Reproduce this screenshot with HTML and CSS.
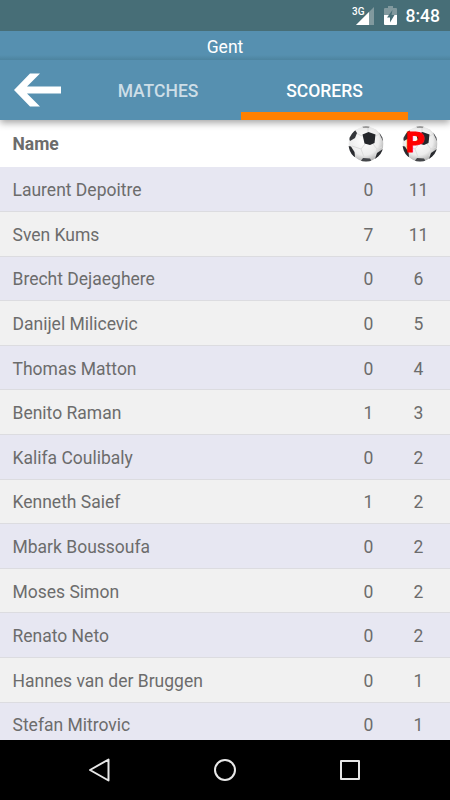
FILE: index.html
```html
<!DOCTYPE html>
<html>
<head>
<meta charset="UTF-8">
<meta name="viewport" content="width=device-width">
<title>Gent</title>
<link rel="stylesheet" href="styles.css">
</head>
<body>
<div class="screen">
	<div class="status">
		<svg class="signal" width="24" height="20" viewBox="0 0 24 20">
			<path d="M22 1V19H4Z" fill="#81999e"/>
			<path d="M0 0H13V9H0Z" fill="#476e77"/>
			<text x="0" y="9" class="net">3G</text>
			<path d="M17 6V19H4Z" fill="#fff"/>
		</svg>
		<svg class="battery" width="13" height="19" viewBox="0 0 13 19">
			<path d="M4 0H9V2H12Q13 2 13 3V9H0V3Q0 2 1 2H4Z" fill="#81999e"/>
			<path d="M0 9H13V18Q13 19 12 19H1Q0 19 0 18Z" fill="#fff"/>
			<path d="M8.5 4L3 11.5H6V16.5L10.5 9H7.5Z" fill="#476e77"/>
		</svg>
		<span class="clock">8:48</span>
	</div>
	<div class="title">Gent</div>
	<div class="tabs">
		<div class="back">
			<svg width="48" height="34" viewBox="0 0 48 34">
				<path d="M0 17L16 0.5H26L13 13.5H47V20.5H13L26 33.5H16Z" fill="#fff"/>
			</svg>
		</div>
		<div class="tab first">MATCHES</div>
		<div class="tab active">SCORERS</div>
	</div>
	<div class="list">
		<div class="head">
			<span class="name">Name</span>
			<svg class="ball" width="36" height="36" viewBox="0 0 36 36">
				<defs>
					<radialGradient id="shade" cx="0.45" cy="0.4" r="0.6">
						<stop offset="0" stop-color="#fff"/>
						<stop offset="0.7" stop-color="#ececec"/>
						<stop offset="1" stop-color="#b4b4b4"/>
					</radialGradient>
					<clipPath id="round"><circle cx="18" cy="18" r="17.5"/></clipPath>
					<g id="football" clip-path="url(#round)">
						<circle cx="18" cy="18" r="17.5" fill="url(#shade)"/>
						<path d="M20 0V6M14 10L8 7M28 10L31 8M17 18L13 23L4 20M25 18L29 23L34 21M13 23L16 31M29 23L27 30" stroke="#dcdcdc" stroke-width="1" fill="none"/>
						<path d="M14.5 8.5L20.5 6L27.5 8.5L26.5 17L22 19L16.5 17.5Z" fill="#24262a"/>
						<path d="M7 4L9 7L7 12L2 15L0 10Z" fill="#34363a"/>
						<path d="M0 20L3 20.5L6.5 26L7 31L0 29Z" fill="#292b2f"/>
						<path d="M15 32L22 32.5L24 36H12Z" fill="#44464a"/>
						<path d="M29 27L35 23L36 26L30 33L27 33Z" fill="#292b2f"/>
						<path d="M31 5L36 11L35 15L32 9Z" fill="#44464a"/>
						<path d="M14 0H22L21 1.5H15Z" fill="#555"/>
					</g>
				</defs>
				<use href="#football"/>
			</svg>
			<svg class="ball" width="36" height="36" viewBox="0 0 36 36">
				<use href="#football"/>
				<text x="3" y="26" class="points">P</text>
			</svg>
		</div>
		<div class="row"><span class="name">Laurent Depoitre</span><span class="num">0</span><span class="num">11</span></div>
		<div class="row"><span class="name">Sven Kums</span><span class="num">7</span><span class="num">11</span></div>
		<div class="row"><span class="name">Brecht Dejaeghere</span><span class="num">0</span><span class="num">6</span></div>
		<div class="row"><span class="name">Danijel Milicevic</span><span class="num">0</span><span class="num">5</span></div>
		<div class="row"><span class="name">Thomas Matton</span><span class="num">0</span><span class="num">4</span></div>
		<div class="row"><span class="name">Benito Raman</span><span class="num">1</span><span class="num">3</span></div>
		<div class="row"><span class="name">Kalifa Coulibaly</span><span class="num">0</span><span class="num">2</span></div>
		<div class="row"><span class="name">Kenneth Saief</span><span class="num">1</span><span class="num">2</span></div>
		<div class="row"><span class="name">Mbark Boussoufa</span><span class="num">0</span><span class="num">2</span></div>
		<div class="row"><span class="name">Moses Simon</span><span class="num">0</span><span class="num">2</span></div>
		<div class="row"><span class="name">Renato Neto</span><span class="num">0</span><span class="num">2</span></div>
		<div class="row"><span class="name">Hannes van der Bruggen</span><span class="num">0</span><span class="num">1</span></div>
		<div class="row"><span class="name">Stefan Mitrovic</span><span class="num">0</span><span class="num">1</span></div>
	</div>
	<div class="nav">
		<svg width="24" height="24" viewBox="0 0 24 24">
			<path d="M20.5 1.5V22.5L2 12Z"/>
		</svg>
		<svg width="24" height="24" viewBox="0 0 24 24">
			<circle cx="12" cy="12" r="10"/>
		</svg>
		<svg width="24" height="24" viewBox="0 0 24 24">
			<rect x="3" y="3" width="18" height="18"/>
		</svg>
	</div>
</div>
</body>
</html>
```
FILE: styles.css
```css
body {
	margin: 0;
	font-family: Roboto, sans-serif;
}

.screen {
	width: 450px;
	height: 800px;
	display: flex;
	flex-direction: column;
	overflow: hidden;
}

.status {
	height: 31px;
	box-sizing: border-box;
	padding: 0 10px 0 0;
	background-color: #476e77;
	display: flex;
	align-items: flex-start;
	justify-content: flex-end;
}

.signal {
	margin-top: 6px;
	margin-right: 8px;
}

.net {
	font-size: 10px;
	font-weight: 500;
	fill: #fff;
}

.battery {
	margin-top: 6px;
	margin-right: 9px;
}

.clock {
	color: #fff;
	font-size: 17.5px;
	font-weight: 500;
	line-height: 33px;
}

.title {
	height: 29px;
	line-height: 33px;
	text-align: center;
	color: #fff;
	font-size: 17.5px;
	background: linear-gradient(#5690b0 24px, #4d849f);
}

.tabs {
	height: 60px;
	background-color: #5690b0;
	display: flex;
	position: relative;
	box-shadow: 0 3px 7px rgba(0, 0, 0, 0.35);
	clip-path: inset(0 0 -12px 0);
}

.back {
	width: 74px;
	box-sizing: border-box;
	padding: 12.5px 0 0 14px;
}

.tab {
	width: 167px;
	box-sizing: border-box;
	text-align: center;
	line-height: 62px;
	font-size: 17.5px;
	font-weight: 500;
	color: #cddee7;
}

.first {
	padding-left: 1px;
}

.active {
	color: #fff;
	border-bottom: 8px solid #ff8000;
}

.list {
	height: 620px;
	overflow: hidden;
	background-color: #fff;
	color: #6c6c6c;
	font-size: 17.5px;
}

.head {
	height: 47.4px;
	box-sizing: border-box;
	padding: 0 12px 0 12.5px;
	display: flex;
	align-items: center;
	font-weight: bold;
}

.head .name {
	padding-top: 1px;
}

.ball {
	margin-left: 18px;
}

.points {
	font-family: "DejaVu Sans", sans-serif;
	font-size: 27px;
	font-weight: bold;
	fill: #f00;
	stroke: #f00;
	stroke-width: 0.8px;
}

.row {
	height: 44.6px;
	box-sizing: border-box;
	padding: 2px 6.5px 0 12.5px;
	border-bottom: 1px solid #dcdce0;
	display: flex;
	align-items: center;
	background-color: #f1f1f1;
}

.row:nth-child(even) {
	background-color: #e7e7f2;
}

.name {
	flex: 1;
}

.num {
	width: 50px;
	text-align: center;
}

.nav {
	height: 60px;
	background-color: #000;
	display: flex;
	justify-content: center;
	align-items: center;
	gap: 101px;
}

.nav svg {
	fill: none;
	stroke: #e8e8e8;
	stroke-width: 2;
	stroke-linejoin: round;
}
```
